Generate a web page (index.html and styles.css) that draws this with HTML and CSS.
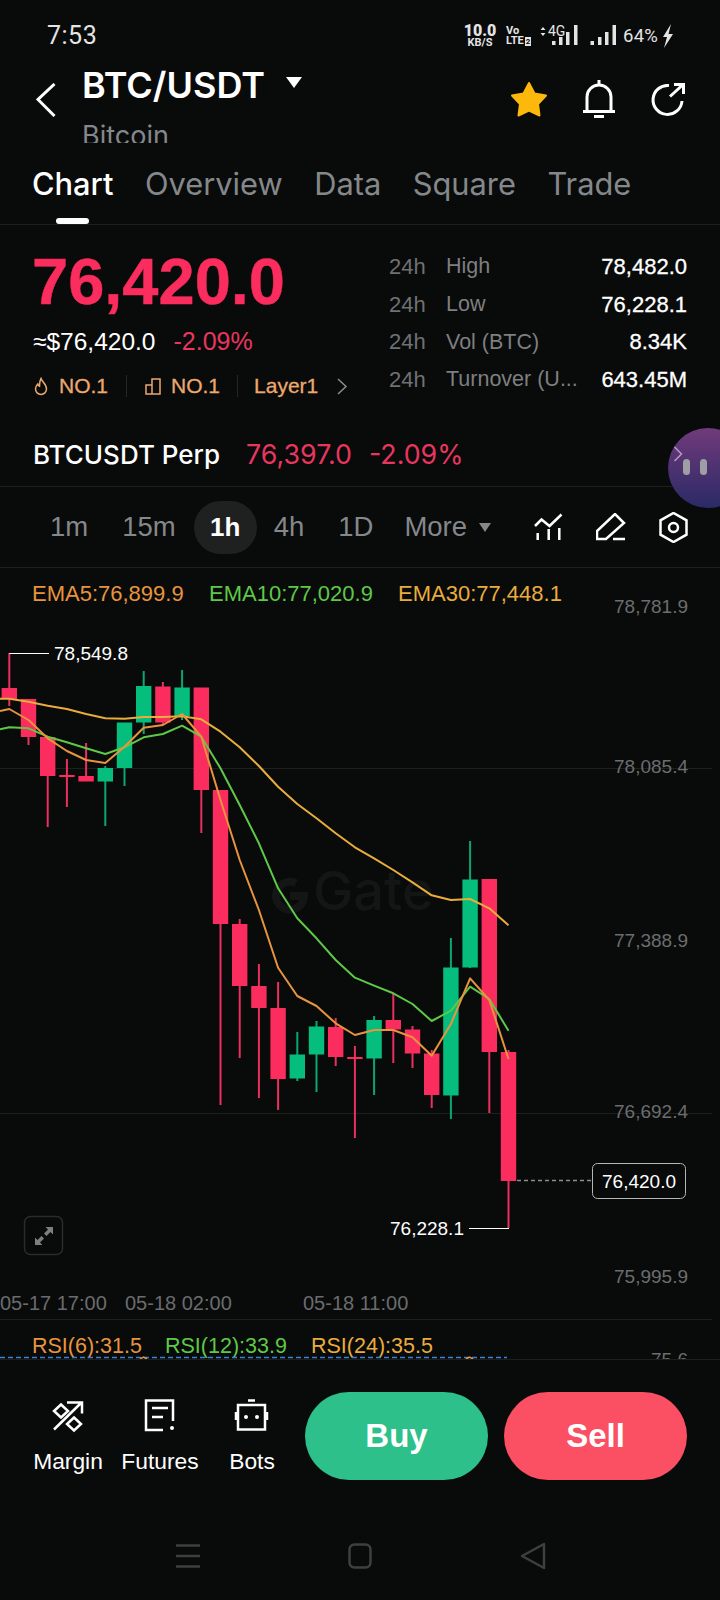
FILE: index.html
```html
<!DOCTYPE html>
<html lang="en">
<head>
    <meta charset="UTF-8">
    <meta name="viewport" content="width=device-width, initial-scale=1.0">
    <title>BTC/USDT</title>
    <link rel="stylesheet" href="styles.css">
</head>
<body>
    <div class="status-bar">
        <span class="status-time">7:53</span>
        <div class="status-icons">
            <div class="net-speed"><b>10.0</b><span>KB/S</span></div>
            <div class="volte"><span>Vo</span><span>LTE<i>2</i></span></div>
            <svg class="cell" width="38" height="24" viewBox="541 25 38 24">
                <path class="cell-arrow" d="M544 28l2.500 3h-5zM544 37l2.500-3h-5z"/>
                <text class="cell-label" x="549" y="37">4G</text>
                <path class="cell-bar" d="M553 42h3.500v4H553zM560 38h3.500v8H560zM567 33h3.500v13H567zM575 26h3.500v20H575z"/>
            </svg>
            <svg class="signal" width="26" height="24" viewBox="591 25 26 24">
                <path class="cell-bar" d="M591.500 42h3.500v4h-3.500zM599 38h3.500v8H599zM606 33h3.500v13H606zM613.500 26h3.500v20h-3.500z"/>
            </svg>
            <span class="battery">64%</span>
            <svg class="bolt" width="12" height="24" viewBox="0 0 12 24"><path d="M9 0L1 13h4l-3 11 9-14H6.500z"/></svg>
        </div>
    </div>

    <div class="header">
        <svg class="back" width="20" height="34" viewBox="0 0 20 34"><path d="M18.500 1L2 16.500 18.500 33"/></svg>
        <div class="pair">
            <div class="pair-name">BTC/USDT<span class="caret caret-big"></span></div>
            <div class="pair-coin"><span>Bitcoin</span></div>
        </div>
        <div class="header-actions">
            <svg width="38" height="36" viewBox="0 0 38 36"><path class="star" d="M19 2l5.500 10.500L36 14.500 28 23l1.500 11.500L19 29.500 8.500 34.500 10 23 2 14.500l11.500-2z"/></svg>
            <svg class="icon" width="34" height="38" viewBox="0 0 34 38"><path d="M17 0v5M5 31V17a12 12 0 0 1 24 0v14M1 31.500h32M12 36.500h10"/></svg>
            <svg class="icon" width="36" height="36" viewBox="0 0 36 36"><path d="M19 4.500A14.500 14.500 0 1 0 32 20M20 15.500L32 4.500M24 3.500h9.500V13"/></svg>
        </div>
    </div>

    <div class="tabs">
        <div class="tab tab-active">Chart<span class="tab-mark"></span></div>
        <div class="tab">Overview</div>
        <div class="tab">Data</div>
        <div class="tab">Square</div>
        <div class="tab">Trade</div>
    </div>

    <div class="summary">
        <div class="summary-left">
            <div class="price">76,420.0</div>
            <div class="price-sub">≈$76,420.0<span class="change">-2.09%</span></div>
            <div class="tags">
                <svg class="tag-icon" width="16" height="19" viewBox="0 0 16 19"><path d="M8 1.500c.8 3 5.500 5.500 5.500 10.500a5.500 5.500 0 0 1-11 0c0-2.500 1.300-3.800 2.300-5 .3 1.200 1 2 1.700 2.200C6.500 7 6.800 3.500 8 1.500z"/></svg>
                <span>NO.1</span>
                <i class="tag-sep"></i>
                <svg class="tag-icon" width="16" height="17" viewBox="0 0 16 17"><path d="M1 16V7h6v9zM7 16V1h8v15z"/></svg>
                <span>NO.1</span>
                <i class="tag-sep tag-sep-last"></i>
                <span>Layer1</span>
                <svg class="tag-more" width="12" height="17" viewBox="0 0 12 17"><path d="M2 1l8 7.500L2 16"/></svg>
            </div>
        </div>
        <div class="stats">
            <div class="stat"><span class="stat-period">24h</span><span class="stat-label">High</span><span class="stat-value">78,482.0</span></div>
            <div class="stat"><span class="stat-period">24h</span><span class="stat-label">Low</span><span class="stat-value">76,228.1</span></div>
            <div class="stat"><span class="stat-period">24h</span><span class="stat-label">Vol (BTC)</span><span class="stat-value">8.34K</span></div>
            <div class="stat"><span class="stat-period">24h</span><span class="stat-label">Turnover (U...</span><span class="stat-value">643.45M</span></div>
        </div>
    </div>

    <div class="perp">
        <span class="perp-name">BTCUSDT Perp</span>
        <span class="perp-num">76,397.0</span>
        <span class="perp-num">-2.09%</span>
    </div>

    <div class="bubble">
        <svg width="10" height="16" viewBox="0 0 10 16"><path d="M1.500 1l7 7-7 7"/></svg>
        <i></i><i></i>
    </div>

    <div class="toolbar">
        <span class="interval">1m</span>
        <span class="interval interval-wide">15m</span>
        <span class="interval interval-active">1h</span>
        <span class="interval">4h</span>
        <span class="interval">1D</span>
        <span class="interval interval-more">More<span class="caret caret-small"></span></span>
        <div class="toolbar-icons">
            <svg class="icon icon-thin" width="30" height="28" viewBox="532 512 30 28"><path d="M534 525l6.500-6.500 8 6.500 12-11.500M536.700 532v7M547.700 528v11M558.300 527v12"/></svg>
            <svg class="icon icon-thin" width="30" height="28" viewBox="596 512 30 28"><path d="M597 538v-8l18-17 9 9-18 16zM613 538h12"/></svg>
            <svg class="icon icon-thin" width="29" height="31" viewBox="659 512 29 31"><path d="M673.500 513l13 7.300v14.400l-13 7.300-13-7.300V520.300z"/><circle cx="673.500" cy="527.500" r="4.500"/></svg>
        </div>
    </div>

    <div class="chart">
        <svg width="720" height="791" viewBox="0 568 720 791">
            <path class="grid" d="M0 768.500h712M0 1113.500h712M0 1319.500h712"/>

            <g class="watermark">
                <path d="M296 883a14 14 0 1 0 8 13h-14"/>
                <text x="313" y="910">Gate</text>
            </g>

            <text class="ema ema5" x="32" y="601">EMA5:76,899.9</text>
            <text class="ema ema10" x="209" y="601">EMA10:77,020.9</text>
            <text class="ema ema30" x="398" y="601">EMA30:77,448.1</text>

            <text class="axis" x="688" y="613">78,781.9</text>
            <text class="axis" x="688" y="773">78,085.4</text>
            <text class="axis" x="688" y="947">77,388.9</text>
            <text class="axis" x="688" y="1118">76,692.4</text>
            <text class="axis" x="688" y="1283">75,995.9</text>
            <text class="axis" x="688" y="1366">75.6</text>

            <g class="down">
                <path class="wick" d="M9.300 653V706M28.500 699V745M47.700 737V827M66.900 759V807M86.100 743V776M162.900 682V725M201.300 688V833M220.500 790V1105M239.700 919V1058M258.900 964V1098M278.100 982V1110M335.700 1018V1066M354.900 1046V1138M393.300 993V1063M412.500 1026V1068M431.700 1050V1108M489.300 879V1113M508.500 1050V1228"/>
                <rect x="1.600" y="688" width="15.400" height="11"/>
                <rect x="20.800" y="699" width="15.400" height="38"/>
                <rect x="40" y="737" width="15.400" height="39"/>
                <rect x="59.200" y="775" width="15.400" height="2"/>
                <rect x="78.400" y="776" width="15.400" height="5.500"/>
                <rect x="155.200" y="686.500" width="15.400" height="36"/>
                <rect x="193.600" y="687.500" width="15.400" height="102.500"/>
                <rect x="212.800" y="790" width="15.400" height="134"/>
                <rect x="232" y="924" width="15.400" height="62"/>
                <rect x="251.200" y="986" width="15.400" height="22"/>
                <rect x="270.400" y="1008" width="15.400" height="71"/>
                <rect x="328" y="1027" width="15.400" height="30"/>
                <rect x="347.200" y="1057" width="15.400" height="2"/>
                <rect x="385.600" y="1020" width="15.400" height="9.500"/>
                <rect x="404.800" y="1029.500" width="15.400" height="24"/>
                <rect x="424" y="1053.500" width="15.400" height="41.500"/>
                <rect x="481.600" y="879" width="15.400" height="173"/>
                <rect x="500.800" y="1052" width="15.400" height="129"/>
            </g>
            <g class="up">
                <path class="wick" d="M105.300 766V826M124.500 768V786M143.700 671V734M182.100 670V720M297.300 1032V1081M316.500 1021V1092M374.100 1016V1095M450.900 938V1119M470.100 841V968"/>
                <rect x="97.600" y="768" width="15.400" height="13.500"/>
                <rect x="116.800" y="722.500" width="15.400" height="45.500"/>
                <rect x="136" y="686" width="15.400" height="36.500"/>
                <rect x="174.400" y="687.500" width="15.400" height="28.500"/>
                <rect x="289.600" y="1054.500" width="15.400" height="24"/>
                <rect x="308.800" y="1026.500" width="15.400" height="28"/>
                <rect x="366.400" y="1020" width="15.400" height="38.500"/>
                <rect x="443.200" y="967.500" width="15.400" height="128"/>
                <rect x="462.400" y="879.500" width="15.400" height="88"/>
            </g>

            <polyline class="line line30" points="0,698.700 9.300,698.700 28.500,701.700 47.700,705.700 66.900,709 86.100,714 105.300,718.300 124.500,718.700 143.700,717 162.900,717 182.100,716.300 201.300,719.300 220.500,731.700 239.700,747.300 258.900,766 278.100,786.700 297.300,804 316.500,818.300 335.700,833.300 354.900,847.300 374.100,858.300 393.300,870 412.500,882.300 431.700,895.300 450.900,900 470.100,899 489.300,908.300 508.500,925.300"/>
            <polyline class="line line10" points="0,729.300 9.300,727.300 28.500,728.300 47.700,736.700 66.900,742.300 86.100,748.300 105.300,754 124.500,747.300 143.700,737.300 162.900,734 182.100,725.700 201.300,736.700 220.500,768.300 239.700,805 258.900,843.300 278.100,888.300 297.300,918.300 316.500,938.300 335.700,960 354.900,977.700 374.100,985.700 393.300,993.300 412.500,1004 431.700,1021 450.900,1010.700 470.100,986.700 489.300,999 508.500,1030.700"/>
            <polyline class="line line5" points="0,711 9.300,709 28.500,720 47.700,738.300 66.900,751 86.100,760 105.300,763 124.500,746.700 143.700,727.700 162.900,725 182.100,714 201.300,736.700 220.500,800 239.700,860 258.900,910 278.100,967.700 297.300,996 316.500,1006 335.700,1023.300 354.900,1035 374.100,1030 393.300,1030 412.500,1037.300 431.700,1055.700 450.900,1024 470.100,978.300 489.300,1000 508.500,1059"/>

            <path class="marker" d="M9.300 653.500H49M469 1228.500h40"/>
            <text class="marker-text" x="54" y="660">78,549.8</text>
            <text class="marker-text" x="390" y="1235">76,228.1</text>

            <path class="last-line" d="M517 1180.500h75"/>
            <rect class="last-box" x="592.500" y="1163.500" width="93" height="35" rx="5"/>
            <text class="last-text" x="639" y="1188">76,420.0</text>

            <text class="time" x="0" y="1310">05-17 17:00</text>
            <text class="time" x="125" y="1310">05-18 02:00</text>
            <text class="time" x="303" y="1310">05-18 11:00</text>

            <text class="ema rsi ema5" x="32" y="1353">RSI(6):31.5</text>
            <text class="ema rsi ema10" x="165" y="1353">RSI(12):33.9</text>
            <text class="ema rsi ema30" x="311" y="1353">RSI(24):35.5</text>
            <path class="rsi-line" d="M0 1357.500h507"/>
            <path class="rsi-tip" d="M140 1359l3.500-2 3.500 2M466 1359l3.500-2 3.500 2"/>

            <rect class="expand-box" x="24.500" y="1216.500" width="38" height="38" rx="6"/>
            <path class="expand-arrows" d="M53 1227v7.500l-2.500-2.500-4 4-2.500-2.500 4-4-2.500-2.500zM35 1245v-7.500l2.500 2.500 4-4 2.500 2.500-4 4 2.500 2.500z"/>
        </svg>
    </div>

    <div class="bottom-bar">
        <div class="actions">
            <div class="tool">
                <svg class="icon icon-thin" width="32" height="34" viewBox="52 1399 32 34"><path d="M54 1429.500l27.500-27M67 1402.500h15v11M61 1404.500l7 6.500-7 6.500-7-6.500zM74 1417.500l7 6.500-7 6.500-7-6.500z"/></svg>
                <span>Margin</span>
            </div>
            <div class="tool">
                <svg class="icon icon-thin" width="32" height="34" viewBox="144 1399 32 34"><path d="M163 1430h-17v-29.500h27V1421M152 1408h16M152 1417h11"/><circle class="tool-dot" cx="172" cy="1428" r="2"/></svg>
                <span>Futures</span>
            </div>
            <div class="tool">
                <svg class="icon icon-thin" width="36" height="34" viewBox="234 1399 36 34"><path d="M248 1400.500h7M238 1405h27v24.500h-27zM236 1412v8M267 1412v8"/><circle class="tool-dot" cx="246" cy="1417" r="2"/><circle class="tool-dot" cx="257" cy="1417" r="2"/></svg>
                <span>Bots</span>
            </div>
        </div>
        <div class="btn btn-buy">Buy</div>
        <div class="btn btn-sell">Sell</div>
    </div>

    <div class="nav-bar">
        <svg width="24" height="24" viewBox="0 0 24 24"><path d="M0 1.500h24M0 12h24M0 22.500h24"/></svg>
        <svg width="24" height="26" viewBox="0 0 24 26"><rect x="1.500" y="1.500" width="21" height="23" rx="5"/></svg>
        <svg width="26" height="28" viewBox="0 0 26 28"><path d="M24 2v24L2 14z"/></svg>
    </div>
</body>
</html>
```

FILE: styles.css
```css
* {
    margin: 0;
    padding: 0;
    box-sizing: border-box;
}

body {
    width: 720px;
    height: 1600px;
    position: relative;
    overflow: hidden;
    background-color: #090a0a;
    color: #ffffff;
    font-family: "Liberation Sans", Arial, sans-serif;
}

svg {
    display: block;
    flex-shrink: 0;
}

i {
    font-style: normal;
}

/* Status bar */
.status-bar {
    height: 65px;
    display: flex;
    justify-content: space-between;
    padding: 22px 46px 0 47px;
    font-family: Roboto, sans-serif;
    color: #e4e4e4;
}

.status-time {
    font-size: 25px;
    font-weight: 400;
    letter-spacing: 0.5px;
    line-height: 28px;
}

.status-icons {
    display: flex;
    height: 24px;
    margin-top: 2px;
    align-items: center;
}

.net-speed {
    width: 32px;
    display: flex;
    flex-direction: column;
    align-items: center;
    font-size: 11px;
    font-weight: 700;
    line-height: 10px;
}

.net-speed b {
    font-size: 16px;
    line-height: 14px;
}

.volte {
    width: 26px;
    margin-left: 10px;
    display: flex;
    flex-direction: column;
    font-size: 11px;
    font-weight: 700;
    line-height: 10px;
}

.volte i {
    background-color: #e4e4e4;
    color: #090a0a;
    font-size: 8px;
    padding: 0 1px;
    margin-left: 1px;
}

.cell {
    margin-left: 8px;
}

.cell-arrow,
.cell-bar {
    fill: #e4e4e4;
}

.cell-label {
    fill: #e4e4e4;
    font-size: 14px;
}

.signal {
    margin-left: 12px;
}

.battery {
    margin-left: 7px;
    font-size: 18.500px;
    letter-spacing: 0.2px;
}

.bolt {
    margin-left: 4px;
    fill: #e4e4e4;
}

/* Pair header */
.header {
    height: 83px;
    display: flex;
    align-items: flex-start;
    padding-left: 36px;
    font-family: Inter, sans-serif;
}

.back {
    margin-top: 18px;
    fill: none;
    stroke: #ffffff;
    stroke-width: 3;
}

.pair {
    margin-left: 26px;
}

.pair-name {
    display: flex;
    align-items: center;
    font-size: 36px;
    font-weight: 600;
    line-height: 40px;
}

.caret {
    display: inline-block;
    border-style: solid;
    border-color: transparent;
    border-bottom-width: 0;
}

.caret-big {
    margin: 0 0 6px 21px;
    border-width: 11px 8.500px 0;
    border-top-color: #ffffff;
}

.caret-small {
    margin: 0 0 3px 12px;
    border-width: 9px 6px 0;
    border-top-color: #85888a;
    vertical-align: middle;
}

.pair-coin {
    height: 22px;
    margin-top: 16px;
    overflow: hidden;
    color: #85888a;
    font-size: 27px;
    line-height: 30px;
}

.header-actions {
    display: flex;
    align-items: center;
    margin-left: auto;
    margin-top: 15px;
    padding-right: 34px;
    gap: 34px;
}

.star {
    fill: #fdb90b;
    stroke: #fdb90b;
    stroke-width: 2;
    stroke-linejoin: round;
}

.icon {
    fill: none;
    stroke: #ffffff;
    stroke-width: 3;
}

.icon-thin {
    stroke-width: 2.500;
}

/* Tabs */
.tabs {
    height: 77px;
    display: flex;
    gap: 31.500px;
    padding: 18px 32px 0;
    border-bottom: 1px solid #1d1e1e;
    font-family: Inter, sans-serif;
    font-size: 30.800px;
    line-height: 36px;
    color: #85888a;
}

.tab-active {
    display: flex;
    flex-direction: column;
    align-items: center;
    color: #ffffff;
    font-weight: 500;
}

.tab-mark {
    width: 33px;
    height: 6px;
    margin-top: 16px;
    border-radius: 3px;
    background-color: #ffffff;
}

/* Price summary */
.summary {
    height: 199px;
    display: flex;
    justify-content: space-between;
    padding: 0 33px;
}

.summary-left {
    padding-top: 25px;
}

.price {
    margin-left: -1px;
    color: #fb2c5e;
    font-size: 65px;
    font-weight: 700;
    line-height: 64px;
    -webkit-text-stroke: 0.5px #fb2c5e;
}

.price-sub {
    margin-top: 12px;
    font-size: 24.500px;
    line-height: 30px;
}

.change {
    margin-left: 18px;
    color: #e8365f;
    font-size: 25px;
}

.tags {
    display: flex;
    align-items: center;
    margin-top: 14px;
    color: #eba96f;
    font-size: 21px;
    line-height: 30px;
    -webkit-text-stroke: 0.3px #eba96f;
}

.tag-icon {
    margin-right: 10px;
    fill: none;
    stroke: #eba96f;
    stroke-width: 1.500;
}

.tag-sep {
    width: 1px;
    height: 22px;
    margin: 0 18px;
    background-color: #2a2520;
}

.tag-sep-last {
    margin: 0 16px 0 17px;
}

.tag-more {
    margin-left: 18px;
    fill: none;
    stroke: #8a8c8e;
    stroke-width: 1.500;
}

.stats {
    width: 298px;
    padding-top: 23px;
    font-size: 22px;
}

.stat {
    height: 37.700px;
    display: flex;
    align-items: center;
}

.stat-period {
    width: 57px;
    color: #6f7173;
}

.stat-label {
    flex: 1;
    color: #7d7f81;
    font-size: 21.500px;
}

.stat-value {
    color: #ffffff;
    -webkit-text-stroke: 0.3px #ffffff;
}

/* Perpetual row */
.perp {
    height: 63px;
    display: flex;
    align-items: center;
    padding: 0 33px 2px;
    border-bottom: 1px solid #1d1e1e;
    font-family: Inter, sans-serif;
}

.perp-name {
    font-size: 26px;
    font-weight: 500;
    margin-right: 26px;
}

.perp-num {
    margin-right: 17px;
    color: #e8365f;
    font-size: 26.800px;
}

.bubble {
    position: absolute;
    left: 668px;
    top: 428px;
    width: 80px;
    height: 80px;
    display: flex;
    gap: 10px;
    padding: 31px 0 0 15px;
    border-radius: 50%;
    background: linear-gradient(#713a7b, #2a2a66);
}

.bubble svg {
    position: absolute;
    left: 5px;
    top: 18px;
    fill: none;
    stroke: #b69ac4;
    stroke-width: 1.500;
}

.bubble i {
    width: 7px;
    height: 16px;
    border-radius: 4px;
    background-color: #a09ea5;
}

/* Interval toolbar */
.toolbar {
    height: 81px;
    display: flex;
    align-items: center;
    padding-left: 33px;
    border-bottom: 1px solid #1d1e1e;
    color: #85888a;
    font-size: 27.500px;
}

.interval {
    padding: 0 17px;
    white-space: nowrap;
}

.interval-wide {
    margin-right: 1px;
}

.interval-active {
    height: 53px;
    padding: 0 16.300px;
    border-radius: 27px;
    background-color: #1f2020;
    color: #ffffff;
    font-size: 26px;
    font-weight: 700;
    line-height: 53px;
}

.interval-more {
    margin-left: -3px;
}

.toolbar-icons {
    display: flex;
    align-items: center;
    margin-left: auto;
    gap: 33px;
    padding-right: 32px;
}

/* Chart */
.chart {
    height: 791px;
}

.grid {
    fill: none;
    stroke: #1e1f1f;
}

.watermark {
    fill: #141515;
}

.watermark path {
    fill: none;
    stroke: #141515;
    stroke-width: 8;
}

.watermark text {
    font-family: Inter, sans-serif;
    font-size: 54px;
    font-weight: 500;
}

.ema {
    font-size: 22px;
}

.rsi {
    font-size: 21.500px;
}

.ema5 {
    fill: #e8943e;
}

.ema10 {
    fill: #5ec947;
}

.ema30 {
    fill: #e9ad3c;
}

.axis {
    fill: #6b6d6f;
    font-size: 19px;
    text-anchor: end;
}

.down rect {
    fill: #fb2c5e;
}

.up rect {
    fill: #05bd7c;
}

.wick {
    fill: none;
    stroke-width: 2;
}

.down .wick {
    stroke: #e9305f;
}

.up .wick {
    stroke: #0ba673;
}

.line {
    fill: none;
    stroke-width: 2;
    stroke-linejoin: round;
}

.line5 {
    stroke: #e8943e;
}

.line10 {
    stroke: #5ec947;
}

.line30 {
    stroke: #e9ad3c;
}

.marker {
    fill: none;
    stroke: #ffffff;
    stroke-width: 1;
}

.marker-text,
.last-text {
    fill: #ffffff;
    font-size: 19px;
}

.last-line {
    fill: none;
    stroke: #8a8c8e;
    stroke-width: 1.500;
    stroke-dasharray: 4 3;
}

.last-box {
    fill: #090a0a;
    stroke: #b5b6b7;
}

.last-text {
    text-anchor: middle;
}

.time {
    fill: #6a6c6e;
    font-size: 20px;
}

.rsi-line {
    fill: none;
    stroke: #3b82d6;
    stroke-width: 1.500;
    stroke-dasharray: 5 3;
}

.rsi-tip {
    fill: none;
    stroke: #e8943e;
    stroke-width: 1.500;
}

.expand-box {
    fill: none;
    stroke: #2a2b2b;
    stroke-width: 1.500;
}

.expand-arrows {
    fill: #7c7e80;
}

/* Bottom bar */
.bottom-bar {
    height: 121px;
    display: flex;
    padding: 32px 33px 0 22px;
    border-top: 1px solid #1d1e1e;
}

.actions {
    display: flex;
    margin-right: 7px;
}

.tool {
    width: 92px;
    display: flex;
    flex-direction: column;
    align-items: center;
    padding-top: 7px;
    font-size: 22.800px;
    line-height: 26px;
}

.tool span {
    margin-top: 15px;
}

.tool-dot {
    fill: #ffffff;
    stroke: none;
}

.btn {
    width: 183px;
    height: 88px;
    border-radius: 44px;
    font-size: 33px;
    font-weight: 700;
    line-height: 88px;
    text-align: center;
}

.btn-buy {
    background-color: #2dc08a;
    margin-right: 16px;
}

.btn-sell {
    background-color: #fb4f64;
}

/* Android nav */
.nav-bar {
    display: flex;
    justify-content: center;
    align-items: center;
    gap: 148px;
    padding: 62px 0 0 2px;
}

.nav-bar svg {
    fill: none;
    stroke: #3e3f3f;
    stroke-width: 2.500;
    stroke-linejoin: round;
}
```
